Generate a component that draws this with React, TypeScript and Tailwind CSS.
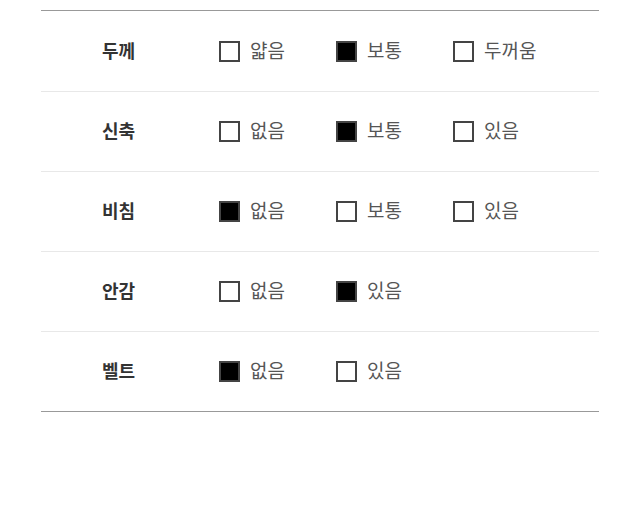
import React from 'react';

type Row = { label: string; options: string[]; checked: number };

const rows: Row[] = [
  { label: '두께', options: ['얇음', '보통', '두꺼움'], checked: 1 },
  { label: '신축', options: ['없음', '보통', '있음'], checked: 1 },
  { label: '비침', options: ['없음', '보통', '있음'], checked: 0 },
  { label: '안감', options: ['없음', '있음'], checked: 1 },
  { label: '벨트', options: ['없음', '있음'], checked: 0 },
];

const App: React.FC = () => {
  return (
    <div
      className="w-[640px] h-[516px] bg-white pt-[10px] px-[41px]"
      style={{ fontFamily: '"Noto Sans CJK KR", "Noto Sans", sans-serif' }}
    >
      <div className="border-t border-b border-[#999]">
        {rows.map((row, i) => (
          <div
            key={row.label}
            className={`flex items-center h-[80px] ${i > 0 ? 'border-t border-[#e8e8e8]' : ''}`}
          >
            <div className="w-[178px] pl-[61px] text-[18px] leading-none font-bold text-[#333] -mt-[3px]">
              {row.label}
            </div>
            {row.options.map((opt, j) => (
              <div key={opt} className="w-[117px] flex items-center gap-[10px]">
                <span
                  className={`w-[21px] h-[21px] border-2 border-[#444] ${
                    j === row.checked ? 'bg-black' : 'bg-white'
                  }`}
                />
                <span className="text-[19px] leading-none text-[#555] -mt-[4px]">{opt}</span>
              </div>
            ))}
          </div>
        ))}
      </div>
    </div>
  );
};

export default App;
